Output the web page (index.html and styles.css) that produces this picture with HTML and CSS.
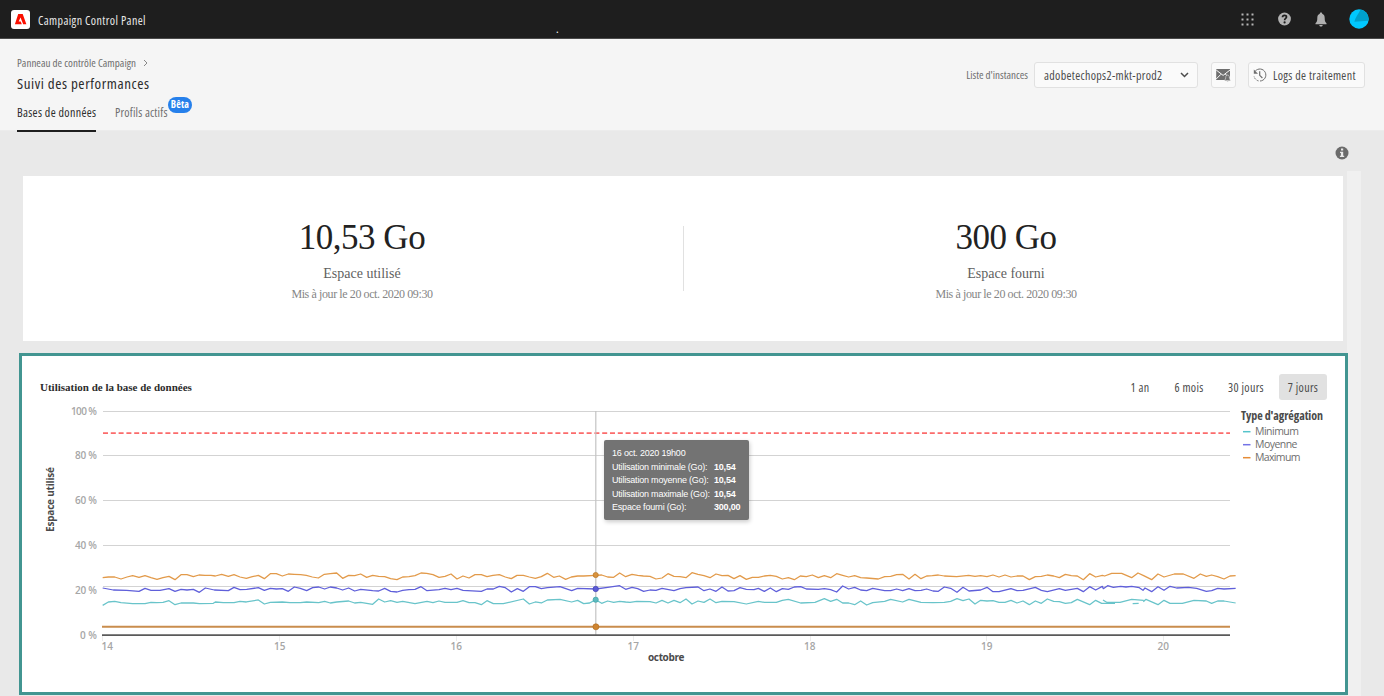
FILE: index.html
```html
<!DOCTYPE html>
<html lang="fr">
<head>
  <meta charset="UTF-8">
  <title>Campaign Control Panel</title>
  <link rel="stylesheet" href="styles.css">
</head>
<body>

<header class="topbar">
  <svg class="logo" width="19" height="19" viewBox="0 0 19 19">
    <rect width="19" height="19" rx="3" fill="#fff"/>
    <path d="M7.2 4h4.5l3.7 10.3h-3.2L9.5 7.4 7.7 11.5h2.1l1 2.8H3.9z" fill="#fa0f00"/>
  </svg>
  <span class="product">Campaign Control Panel</span>
  <span class="dot">.</span>
  <div class="top-icons">
    <svg width="13" height="13" viewBox="0 0 13 13" fill="#b5b5b5">
      <path d="M.5.5h2v2h-2zM5.500.5h2v2h-2zM10.500.5h2v2h-2zM.5 5.500h2v2h-2zM5.500 5.500h2v2h-2zM10.500 5.500h2v2h-2zM.5 10.500h2v2h-2zM5.500 10.500h2v2h-2zM10.500 10.500h2v2h-2z"/>
    </svg>
    <svg width="13" height="14" viewBox="0 0 13 14">
      <circle cx="6.500" cy="7" r="6.400" fill="#b3b3b3"/>
      <path d="M4.500 5.200C4.600 2.700 8.600 2.800 8.500 5c0 1.500-1.900 1.500-1.900 3.300" fill="none" stroke="#1e1e1e" stroke-width="1.700"/>
      <circle cx="6.600" cy="10.400" r="1.100" fill="#1e1e1e"/>
    </svg>
    <svg width="12" height="15" viewBox="0 0 12 15" fill="#b0b0b0">
      <path d="M6 .5c.8 0 1.200.5 1.200 1.300C9 2.400 9.700 4 9.700 6c0 3 .4 3.900 1.800 5.300v.9H.5v-.9C1.900 9.900 2.300 9 2.300 6c0-2 .7-3.600 2.500-4.200C4.800 1 5.200.5 6 .5zM4.300 13h3.400c-.1 1-.8 1.600-1.700 1.600S4.400 14 4.300 13z"/>
    </svg>
    <svg width="20" height="20" viewBox="0 0 20 20">
      <circle cx="10" cy="10" r="9.700" fill="#00c8ff"/>
      <path d="M11.500.5a9.700 9.700 0 0 1 8.100 11.200L5.300 12.700C6.500 8 9.500 5 11.500.5z" fill="#00a0cc"/>
    </svg>
  </div>
</header>

<section class="page-head">
  <div class="titles">
    <div class="crumb">
      <span>Panneau de contrôle Campaign</span>
      <svg width="5" height="8" viewBox="0 0 5 8"><path d="M1 1l3 3-3 3" fill="none" stroke="#888"/></svg>
    </div>
    <h1>Suivi des performances</h1>
    <nav class="tabs">
      <a class="tab active">Bases de données</a>
      <a class="tab second">Profils actifs<span class="badge">Bêta</span></a>
    </nav>
  </div>
  <div class="actions">
    <span class="instance-label">Liste d'instances</span>
    <div class="select">
      <span>adobetechops2-mkt-prod2</span>
      <svg width="9" height="6" viewBox="0 0 9 6"><path d="M1 1l3.500 3.500L8 1" fill="none" stroke="#4b4b4b" stroke-width="1.500"/></svg>
    </div>
    <div class="icon-btn">
      <svg width="16" height="14" viewBox="0.800 -0.500 16 14">
        <path d="M1 .5h13.800v11H1z" fill="#6e6e6e"/>
        <path d="M1 1.500l6.900 5.400 6.900-5.400M1 10.500l4.700-4.700M14.500 9L10 5.700" fill="none" stroke="#fafafa"/>
        <path d="M12.300 6.500c1.600.2 1.900 1.400 1.900 2.700 0 1.200.3 1.700 1 2.300v.8H9.500v-.8c.7-.6 1-1.100 1-2.300 0-1.300.3-2.500 1.800-2.700zM11.500 12.500h1.700l-.8.900z" fill="#6e6e6e" stroke="#fafafa" stroke-width=".5"/>
      </svg>
    </div>
    <div class="logs-btn">
      <svg width="14" height="14" viewBox="0 0 14 14" fill="none" stroke="#6e6e6e">
        <path d="M2.200 3.200A6 6 0 1 1 7 13"/>
        <path d="M5.500 12.900A6 6 0 0 1 1 8" stroke-dasharray="2 1.200"/>
        <path d="M6.700 3.300v4l2.700 2.700" stroke-width="1.200"/>
        <path d="M.8 1.500v4.200h4.200z" fill="#6e6e6e" stroke="none"/>
      </svg>
      <span>Logs de traitement</span>
    </div>
  </div>
</section>

<main>
  <div class="info-row">
    <svg width="14" height="14" viewBox="0 0 14 14">
      <circle cx="7" cy="7" r="6.500" fill="#6b6b6b"/>
      <path d="M6 2.500h2.200v2H6zM5 5.700h3.200v4h1v1.400H4.900V9.700h1V7.100H5z" fill="#e9e9e9"/>
    </svg>
  </div>

  <div class="scroll-area">
    <div class="cards">
      <section class="summary">
        <div class="stat">
          <div class="value">10,53 Go</div>
          <div class="name">Espace utilisé</div>
          <div class="updated">Mis à jour le 20 oct. 2020 09:30</div>
        </div>
        <div class="divider"></div>
        <div class="stat">
          <div class="value">300 Go</div>
          <div class="name">Espace fourni</div>
          <div class="updated">Mis à jour le 20 oct. 2020 09:30</div>
        </div>
      </section>

      <section class="usage">
        <div class="usage-head">
          <h2>Utilisation de la base de données</h2>
          <div class="ranges">
            <span class="range r1">1 an</span>
            <span class="range r2">6 mois</span>
            <span class="range r3">30 jours</span>
            <span class="range r4 selected">7 jours</span>
          </div>
        </div>

        <div class="chart">
          <svg width="1290" height="270" viewBox="40 402 1290 270">
            <!-- grid -->
            <path class="grid" d="M103 411.500H1230M103 455.500H1230M103 500.500H1230M103 545.500H1230M103 586.500H1230"/>
            <path class="ticks" d="M102.500 636v5M279.500 636v5M456.500 636v5M633.500 636v5M810.500 636v5M986.500 636v5M1163.500 636v5"/>
            <path class="limit" d="M103 433.200H1230"/>
            <path class="cursor" d="M595.800 411V635"/>

            <!-- series -->
            <g transform="translate(30 560) scale(.33333)" class="series">
              <polyline class="max" points="218,53 235,51 254,51 273,57 291,51 308,47 327,52 345,47 363,53 381,58 399,53 417,49 435,59 453,44 471,44 490,50 507,45 525,46 543,46 556,48 575,43 595,49 612,44 630,51 649,55 667,50 685,46 703,56 721,41 739,41 757,48 775,42 793,43 812,44 829,46 847,51 865,54 883,43 901,41 920,39 938,55 956,46 974,47 992,42 1010,52 1028,46 1046,49 1064,50 1082,56 1101,59 1118,51 1137,50 1155,47 1173,39 1190,40 1209,44 1227,52 1245,49 1263,42 1281,57 1299,48 1317,54 1335,44 1354,44 1371,50 1389,46 1408,44 1426,51 1444,56 1461,46 1480,46 1498,51 1516,55 1534,50 1552,40 1571,52 1588,48 1607,58 1624,51 1643,48 1661,48 1697,46 1715,45 1733,51 1751,52 1769,39 1787,50 1806,43 1823,46 1840,48 1860,49 1878,57 1896,54 1914,41 1932,49 1950,50 1968,53 1986,38 2004,43 2022,47 2040,53 2058,42 2076,47 2094,46 2112,56 2130,47 2149,58 2167,52 2185,52 2203,48 2221,46 2239,49 2257,57 2275,53 2293,59 2311,48 2329,50 2347,45 2365,53 2383,47 2402,53 2420,41 2438,46 2456,51 2474,47 2492,53 2510,54 2545,57 2564,50 2582,49 2600,44 2618,43 2637,57 2655,43 2673,56 2690,48 2707,47 2725,45 2743,48 2780,50 2816,46 2835,49 2852,47 2871,50 2889,45 2907,51 2925,45 2943,51 2961,48 2979,48 2998,59 3016,50 3034,49 3052,45 3071,48 3088,53 3106,43 3124,47 3142,48 3160,59 3179,41 3197,51 3217,46 3224,48 3245,40 3275,40 3305,53 3324,39 3341,47 3365,59 3384,42 3402,51 3433,42 3460,42 3492,55 3511,42 3529,49 3545,45 3563,50 3582,57 3600,48 3617,47"/>
              <polyline class="avg" points="218,84 250,90 290,91 327,94 345,85 363,91 390,91 417,86 435,94 453,88 471,90 490,88 508,97 526,84 553,90 595,92 612,82 630,89 650,88 685,83 703,91 721,85 739,87 757,86 775,94 793,81 811,85 830,92 848,83 866,81 884,87 901,81 920,84 938,90 956,84 974,93 992,88 1028,92 1046,93 1064,85 1082,94 1101,96 1118,91 1137,89 1155,88 1173,80 1191,92 1227,89 1245,85 1263,89 1281,85 1299,91 1354,94 1371,87 1390,87 1408,79 1426,83 1444,96 1462,86 1480,94 1498,80 1516,80 1534,86 1552,83 1590,80 1625,92 1643,85 1697,87 1733,82 1769,77 1787,88 1806,82 1823,86 1841,94 1860,90 1878,91 1896,85 1932,92 1950,86 1968,83 2004,81 2022,92 2040,87 2058,94 2076,81 2094,93 2112,92 2130,83 2149,88 2172,89 2185,85 2203,94 2221,84 2239,95 2257,86 2275,88 2293,81 2312,80 2329,87 2365,88 2383,86 2402,89 2420,96 2438,78 2456,87 2474,82 2492,90 2510,92 2528,85 2564,92 2582,92 2600,87 2618,92 2637,86 2655,92 2673,91 2690,87 2709,93 2725,94 2743,81 2762,85 2781,97 2799,82 2817,93 2852,90 2871,82 2889,95 2907,95 2943,86 2961,92 2979,91 3016,82 3034,91 3052,95 3088,86 3106,91 3142,85 3160,95 3179,80 3197,90 3217,79 3220,86 3233,77 3250,82 3272,79 3288,81 3305,79 3328,83 3339,91 3345,84 3365,95 3384,80 3402,91 3420,79 3440,84 3475,82 3500,85 3529,94 3545,92 3563,85 3582,87 3617,85"/>
              <polyline class="min" points="218,136 235,126 254,124 273,128 308,131 345,131 363,127 380,128 399,127 417,122 435,134 453,129 490,129 508,131 550,130 556,126 580,128 612,128 630,124 649,126 685,120 703,132 721,127 757,126 780,128 811,128 830,126 866,128 884,124 901,129 920,126 956,123 974,129 992,127 1028,133 1046,117 1064,126 1082,122 1101,127 1118,124 1155,131 1191,124 1209,128 1227,123 1245,127 1281,127 1299,122 1317,128 1335,128 1354,134 1371,122 1390,131 1420,131 1480,117 1498,132 1516,126 1534,129 1552,120 1590,118 1625,126 1643,121 1661,131 1679,129 1697,119 1715,130 1733,123 1751,127 1769,124 1787,126 1800,127 1820,124 1860,125 1878,129 1896,121 1914,129 1932,121 1950,128 1968,117 1986,132 2004,123 2022,127 2040,117 2058,128 2076,124 2112,125 2149,132 2185,124 2203,127 2239,127 2257,121 2275,118 2312,129 2355,127 2383,116 2402,124 2420,118 2438,129 2456,129 2474,134 2492,123 2510,135 2528,128 2564,124 2582,118 2618,126 2637,118 2673,127 2709,128 2743,127 2762,124 2781,116 2799,122 2817,117 2835,132 2852,121 2871,123 2889,122 2907,127 2925,127 2943,121 2961,129 2979,123 2998,134 3016,123 3034,130 3052,117 3071,124 3088,125 3106,130 3124,128 3142,118 3179,134 3197,121 3215,130 3255,130"/>
              <path class="min" d="M3219 120l11 7h40l35-9 36 3M3308 131l18-1M3340 125l8-7 36 16 18-13 18 9h37l35-9 37 2 16 7 18-7h19l35 6"/>
            </g>
            <path d="M102 626.800H1230" stroke="#c98d4d" stroke-width="2"/>
            <path d="M102 635.200H1230" stroke="#5a5a5a" stroke-width="1.800"/>
            <g stroke-width=".7">
              <circle cx="595.700" cy="575" r="2.600" fill="#d9933e" stroke="#b87523"/>
              <circle cx="595.700" cy="589" r="2.700" fill="#5c5cd6" stroke="#4242b5"/>
              <circle cx="595.700" cy="599.700" r="2.600" fill="#5bbcc0" stroke="#42a1a6"/>
              <circle cx="595.900" cy="626.800" r="3" fill="#cf8430" stroke="#b06e22"/>
            </g>

            <g class="axis">
              <text x="71" y="415" textLength="26">100 %</text>
              <text x="75" y="459" textLength="22">80 %</text>
              <text x="75" y="504" textLength="22">60 %</text>
              <text x="75" y="549" textLength="22">40 %</text>
              <text x="75" y="594" textLength="22">20 %</text>
              <text x="80" y="639" textLength="17">0 %</text>
              <text x="101.500" y="649.500">14</text>
              <text x="274" y="649.500">15</text>
              <text x="450.500" y="649.500">16</text>
              <text x="627.500" y="649.500">17</text>
              <text x="804" y="649.500">18</text>
              <text x="981" y="649.500">19</text>
              <text x="1157.500" y="649.500">20</text>
            </g>
            <g class="axis-title">
              <text x="648" y="660.500" textLength="36.500">octobre</text>
              <text transform="translate(54 532) rotate(-90)" textLength="65">Espace utilisé</text>
            </g>

            <text class="legend-title" x="1241" y="419.500" textLength="82">Type d'agrégation</text>
            <g class="legend">
              <text x="1255" y="435" textLength="44">Minimum</text>
              <text x="1255" y="448" textLength="42.500">Moyenne</text>
              <text x="1255" y="461" textLength="45.500">Maximum</text>
            </g>
            <g stroke-width="1.500">
              <path d="M1243 431.700h7.500" stroke="#55c4cb"/>
              <path d="M1243 444.700h7.500" stroke="#7373e6"/>
              <path d="M1243 457.700h7.500" stroke="#e68c37"/>
            </g>
          </svg>

          <div class="tooltip">
            <div>16 oct. 2020 19h00</div>
            <div class="line"><span>Utilisation minimale (Go):</span><b>10,54</b></div>
            <div class="line"><span>Utilisation moyenne (Go):</span><b>10,54</b></div>
            <div class="line"><span>Utilisation maximale (Go):</span><b>10,54</b></div>
            <div class="line"><span>Espace fourni (Go):</span><b>300,00</b></div>
          </div>
        </div>
      </section>
    </div>
    <div class="track"></div>
  </div>
</main>

</body>
</html>
```
FILE: styles.css
```css
* {
  box-sizing: border-box;
}

body {
  margin: 0;
  height: 696px;
  overflow: hidden;
  display: flex;
  flex-direction: column;
  background: #e9e9e9;
  font-family: "Open Sans", "Noto Sans", sans-serif;
  font-stretch: 75%;
  font-size: 12px;
  letter-spacing: 0.33px;
  color: #4b4b4b;
  white-space: nowrap;
}

svg {
  display: block;
  flex: none;
}

/* top bar */
.topbar {
  height: 39px;
  flex: none;
  display: flex;
  align-items: center;
  padding: 0 15px 0 11px;
  background: #1e1e1e;
  border-bottom: 1px solid #4a4a4a;
}

.product {
  margin-left: 8px;
  width: 108px;
  padding-top: 2px;
  letter-spacing: 0.4px;
  color: #e8e8e8;
}

.dot {
  margin-left: 410px;
  padding-top: 18px;
  color: #fff;
}

.top-icons {
  margin-left: auto;
  display: flex;
  align-items: center;
  gap: 24px;
}

.top-icons svg:last-child {
  margin-left: -1.5px;
}

/* page header */
.page-head {
  height: 92px;
  flex: none;
  display: flex;
  justify-content: space-between;
  padding: 0 19px 0 17px;
  background: #f5f5f5;
  border-bottom: 1px solid #ececec;
}

.crumb {
  display: flex;
  align-items: center;
  gap: 7px;
  margin-top: 16px;
  height: 16px;
  font-size: 11px;
  letter-spacing: 0.03px;
  color: #6e6e6e;
}

.crumb span {
  padding-bottom: 1px;
}

h1 {
  margin: 3px 0 0;
  font-size: 15px;
  line-height: 19px;
  letter-spacing: 0.57px;
  font-weight: 400;
  color: #2c2c2c;
}

.tabs {
  display: flex;
  margin-top: 9px;
}

.tab {
  height: 30px;
  line-height: 21px;
}

.tab.active {
  width: 79px;
  color: #2c2c2c;
  border-bottom: 2px solid #1e1e1e;
}

.tab.second {
  position: relative;
  margin-left: 19px;
  letter-spacing: 0.2px;
  color: #6e6e6e;
}

.badge {
  position: absolute;
  left: 53px;
  top: -5px;
  width: 24px;
  height: 16px;
  line-height: 15px;
  border-radius: 8px;
  background: #2680eb;
  color: #fff;
  font-size: 10px;
  font-weight: 700;
  text-align: center;
}

.actions {
  display: flex;
  height: 26px;
  margin-top: 23px;
  align-items: center;
}

.instance-label {
  font-size: 11px;
  letter-spacing: 0;
  color: #6e6e6e;
  margin-right: 6px;
  padding-bottom: 1px;
}

.select,
.icon-btn,
.logs-btn {
  height: 26px;
  display: flex;
  align-items: center;
  background: #fafafa;
  border: 1px solid #e1e1e1;
  border-radius: 3px;
}

.select {
  width: 164px;
  justify-content: space-between;
  padding: 0 8px 0 9px;
}

.icon-btn {
  width: 25px;
  justify-content: center;
  margin: 0 12px 0 13px;
}

.logs-btn {
  width: 117px;
  padding-left: 4px;
  gap: 6px;
}

/* content */
.info-row {
  height: 40px;
  display: flex;
  justify-content: flex-end;
  padding: 15px 35px 0 0;
}

.scroll-area {
  display: flex;
  height: 525px;
}

.cards {
  width: 1329px;
  flex: none;
  margin-left: 19px;
  margin-right: -1px;
  padding-top: 5px;
  z-index: 1;
}

.track {
  width: 14px;
  background: #f0f0f0;
}

.summary {
  width: 1320px;
  height: 165px;
  margin-left: 4px;
  display: flex;
  align-items: center;
  background: #fff;
  font-family: "Liberation Serif", serif;
  text-align: center;
}

.stat {
  width: 660px;
  padding: 3px 0 0 18px;
}

.stat:last-child {
  width: 659px;
  padding: 3px 15px 0 0;
}

.divider {
  width: 1px;
  height: 65px;
  background: #e1e1e1;
}

.value {
  font-size: 35px;
  line-height: 40px;
  letter-spacing: -0.5px;
  color: #222;
}

.name {
  margin-top: 6px;
  font-size: 14px;
  line-height: 20px;
  letter-spacing: 0;
  color: #5f5f5f;
}

.updated {
  margin-top: 2px;
  font-size: 12px;
  line-height: 16px;
  letter-spacing: -0.4px;
  color: #858585;
}

.usage {
  height: 342px;
  margin-top: 12px;
  background: #fff;
  border: 3px solid #429591;
}

.usage-head {
  height: 46px;
  padding: 18px 18px 0 18px;
  display: flex;
  justify-content: space-between;
}

h2 {
  margin: 7px 0 0;
  font-family: "Liberation Serif", serif;
  font-size: 11px;
  line-height: 13px;
  letter-spacing: 0;
  font-weight: 700;
  color: #2c2c2c;
}

.ranges {
  display: flex;
}

.range {
  height: 26px;
  line-height: 28px;
  text-align: center;
  border-radius: 3px;
}

.r1 {
  width: 36px;
}

.r2 {
  width: 62px;
}

.r3 {
  width: 52px;
}

.r4 {
  width: 48px;
  margin-left: 7px;
}

.selected {
  background: #e1e1e1;
}

/* chart */
.chart {
  position: relative;
  padding-left: 18px;
  letter-spacing: 0;
}

.grid {
  stroke: #d3d3d3;
}

.ticks {
  stroke: #ececec;
}

.cursor {
  stroke: #c4c4c4;
  stroke-width: 1.2;
}

.limit {
  stroke: #fb6b6b;
  stroke-width: 1.7;
  stroke-dasharray: 5 2.8;
}

.series {
  fill: none;
  stroke-width: 3.8;
  stroke-linejoin: round;
}

.max {
  stroke: #e29a4a;
}

.avg {
  stroke: #5f5fda;
}

.min {
  stroke: #69c4ca;
}

.axis {
  font-size: 10px;
  font-stretch: normal;
  fill: #a6a6a6;
  font-weight: 600;
}

.axis-title {
  font-size: 10px;
  font-stretch: normal;
  font-weight: 700;
  fill: #4b4b4b;
}

.legend-title {
  font-size: 12px;
  font-weight: 700;
  fill: #4b4b4b;
}

.legend {
  font-size: 10.5px;
  font-stretch: normal;
  fill: #6e6e6e;
}

.tooltip {
  position: absolute;
  left: 582px;
  top: 38px;
  width: 145px;
  height: 80px;
  padding: 7px 8px;
  background: #737373;
  border-radius: 2px;
  box-shadow: 1px 2px 4px rgba(0,0,0,0.2);
  color: #fff;
  font-family: "Liberation Sans", sans-serif;
  font-size: 9px;
  font-stretch: normal;
  line-height: 13.5px;
  letter-spacing: -0.2px;
}

.line {
  display: flex;
}

.line span {
  width: 102px;
}
```
